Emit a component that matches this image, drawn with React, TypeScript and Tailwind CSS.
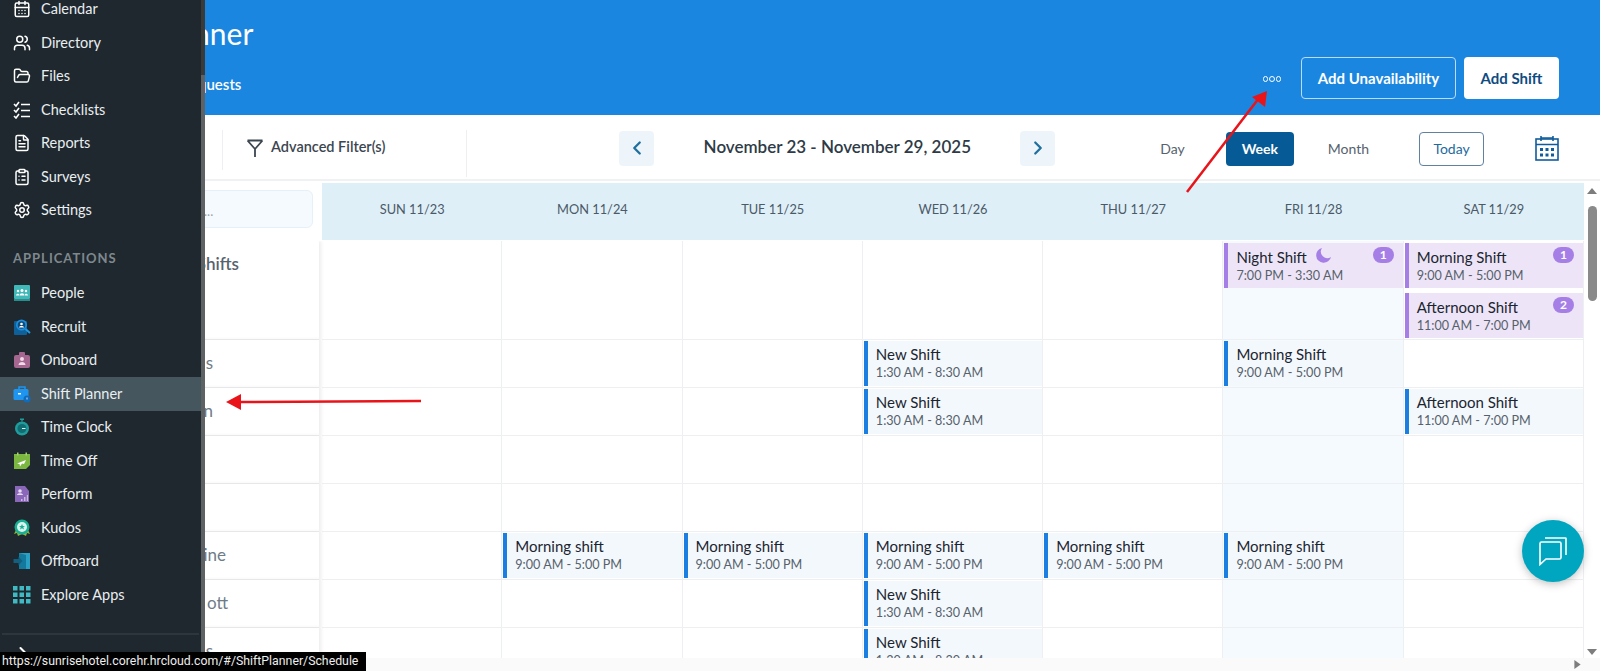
import React from 'react';
import {
  CalendarDays,
  ChevronLeft,
  ChevronRight,
  ClipboardList,
  FileText,
  FolderOpen,
  Settings,
  Users,
} from 'lucide-react';

type Shift = { name: string; time: string; purple?: boolean; badge?: number; moon?: boolean };
type Row = { label: string; pr: string; h: string; top?: boolean; cells: Record<number, Shift[]> };

const morning = { name: 'Morning shift', time: '9:00 AM - 5:00 PM' };
const newShift = { name: 'New Shift', time: '1:30 AM - 8:30 AM' };

const days = ['SUN 11/23', 'MON 11/24', 'TUE 11/25', 'WED 11/26', 'THU 11/27', 'FRI 11/28', 'SAT 11/29'];

const rows: Row[] = [
  {
    label: 'Open Shifts',
    pr: 'pr-[80px]',
    h: 'h-[99px]',
    top: true,
    cells: {
      5: [{ name: 'Night Shift', time: '7:00 PM - 3:30 AM', purple: true, badge: 1, moon: true }],
      6: [
        { name: 'Morning Shift', time: '9:00 AM - 5:00 PM', purple: true, badge: 1 },
        { name: 'Afternoon Shift', time: '11:00 AM - 7:00 PM', purple: true, badge: 2 },
      ],
    },
  },
  {
    label: 's',
    pr: 'pr-[106px]',
    h: 'h-[48px]',
    cells: { 3: [newShift], 5: [{ name: 'Morning Shift', time: '9:00 AM - 5:00 PM' }] },
  },
  {
    label: 'n',
    pr: 'pr-[106px]',
    h: 'h-[48px]',
    cells: { 3: [newShift], 6: [{ name: 'Afternoon Shift', time: '11:00 AM - 7:00 PM' }] },
  },
  { label: '', pr: '', h: 'h-[48px]', cells: {} },
  { label: '', pr: '', h: 'h-[48px]', cells: {} },
  {
    label: 'ine',
    pr: 'pr-[93px]',
    h: 'h-[48px]',
    cells: { 1: [morning], 2: [morning], 3: [morning], 4: [morning], 5: [morning] },
  },
  { label: 'ott', pr: 'pr-[91px]', h: 'h-[48px]', cells: { 3: [newShift] } },
  { label: 's', pr: 'pr-[106px]', h: 'h-[48px]', cells: { 3: [newShift] } },
];

const ChecklistIcon = () => (
  <svg viewBox="0 0 18 18" className="h-[18px] w-[18px]" fill="none" stroke="#fff" strokeWidth="1.600">
    <path d="M1 3l2 2 3-4M1 9l2 2 3-4M1 15l2 2 3-4" />
    <path d="M8 3.500h9M8 9.500h9M8 15.500h9" />
  </svg>
);

const PeopleIcon = () => (
  <svg viewBox="0 0 18 18" className="h-[18px] w-[18px]">
    <rect x="1" y="1" width="16" height="14" rx="1" fill="#41b8b8" />
    <rect x="1" y="15" width="16" height="2" fill="#2a8c8c" />
    <circle cx="9" cy="6.500" r="1.500" fill="#fff" />
    <circle cx="5" cy="7" r="1.200" fill="#fff" />
    <circle cx="13" cy="7" r="1.200" fill="#fff" />
    <path d="M6.500 11.500c0-3 5-3 5 0zM3 11.500c0-2 3-2.400 3-1v1zM15 11.500c0-2-3-2.400-3-1v1z" fill="#fff" />
  </svg>
);

const RecruitIcon = () => (
  <svg viewBox="0 0 18 18" className="h-[18px] w-[18px]">
    <rect x="1" y="3" width="13" height="14" rx="1" fill="#0f5f99" />
    <circle cx="8.500" cy="7" r="5.500" fill="#1c8fdc" />
    <circle cx="8.500" cy="7" r="3.800" fill="#0f4c7d" />
    <circle cx="8.500" cy="6" r="1.300" fill="#fff" />
    <path d="M6 9.500c0-2 5-2 5 0z" fill="#fff" />
    <path d="M12.500 11l4.500 4" stroke="#1c9ae8" strokeWidth="2" />
  </svg>
);

const OnboardIcon = () => (
  <svg viewBox="0 0 18 18" className="h-[18px] w-[18px]">
    <rect x="1" y="4" width="16" height="13" rx="2" fill="#a5668f" />
    <rect x="6" y="1" width="6" height="5" rx="1" fill="#a5668f" />
    <circle cx="9" cy="8" r="2" fill="#f0d9e8" />
    <path d="M5.500 14c0-4 7-4 7 0z" fill="#f0d9e8" />
  </svg>
);

const PlannerIcon = () => (
  <svg viewBox="0 0 18 18" className="h-[18px] w-[18px]">
    <path d="M6 4V2h6v2" fill="none" stroke="#1e96f0" strokeWidth="1.500" />
    <rect x="0.500" y="4" width="15" height="11" rx="1.500" fill="#1e96f0" />
    <rect x="5" y="8" width="3" height="1.500" fill="#fff" />
    <circle cx="14" cy="14" r="3.500" fill="#0f6cbd" />
    <path d="M14 12.500V14.500" stroke="#fff" strokeWidth="0.800" />
  </svg>
);

const ClockIcon = () => (
  <svg viewBox="0 0 18 18" className="h-[18px] w-[18px]">
    <rect x="7" y="0.500" width="4" height="1.500" fill="#1f9c9c" />
    <rect x="8.300" y="1.500" width="1.400" height="2" fill="#1f9c9c" />
    <circle cx="9" cy="10.500" r="7" fill="#1f9c9c" />
    <circle cx="9" cy="10.500" r="4.500" fill="#126d73" />
    <path d="M9 10.500h3.500" stroke="#d8f2f2" strokeWidth="1" />
  </svg>
);

const TimeOffIcon = () => (
  <svg viewBox="0 0 18 18" className="h-[18px] w-[18px]">
    <path d="M1 2h16v11l-4 4H1z" fill="#7cb742" />
    <rect x="4" y="0.500" width="1.500" height="3" fill="#a6d46e" />
    <rect x="12.500" y="0.500" width="1.500" height="3" fill="#a6d46e" />
    <path d="M4 11.500l9-3.500-2 4-2-.5-2 3-.5-2.500z" fill="#fff" />
  </svg>
);

const PerformIcon = () => (
  <svg viewBox="0 0 18 18" className="h-[18px] w-[18px]">
    <path d="M2 1h10l4 5v11H2z" fill="#8a67b8" />
    <circle cx="7" cy="6" r="1.800" fill="#e6dcf3" />
    <path d="M4 10c0-2.500 6-2.500 6 0z" fill="#e6dcf3" />
    <path d="M8 16v-2h1.500v2zM11 16v-4h1.500v4zM13.800 16v-6h1.200v6z" fill="#c9b6e3" />
  </svg>
);

const KudosIcon = () => (
  <svg viewBox="0 0 18 18" className="h-[18px] w-[18px]">
    <path d="M1 15l3-1 1 3 4-2 4 2 1-3 3 1-2-4H3z" fill="#8ab83c" />
    <circle cx="9" cy="8" r="7.500" fill="#18b094" />
    <circle cx="9" cy="8" r="5" fill="#d9f4ee" />
    <path d="M9 5l.9 2h2.100l-1.700 1.300.7 2.200L9 9.200 7 10.500l.7-2.200L6 7h2.100z" fill="#18b094" />
  </svg>
);

const OffboardIcon = () => (
  <svg viewBox="0 0 18 18" className="h-[18px] w-[18px]">
    <path d="M6 1h11v16H6z" fill="#2aa0c4" />
    <path d="M6 1l7 2v14H6z" fill="#137a9e" />
    <path d="M0.500 7h5V4.500L9.500 9l-4 4.500V11h-5z" fill="#125f80" />
  </svg>
);

const AppsIcon = () => (
  <svg viewBox="0 0 18 18" className="h-[18px] w-[18px]" fill="#3fb9c4">
    {[0, 6.5, 13].map((y) =>
      [0, 6.5, 13].map((x) => <rect key={`${x}-${y}`} x={x} y={y} width="4.500" height="4.500" />)
    )}
  </svg>
);

const topLinks = [
  { icon: CalendarDays, label: 'Calendar' },
  { icon: Users, label: 'Directory' },
  { icon: FolderOpen, label: 'Files' },
  { icon: ChecklistIcon, label: 'Checklists' },
  { icon: FileText, label: 'Reports' },
  { icon: ClipboardList, label: 'Surveys' },
  { icon: Settings, label: 'Settings' },
];

const appLinks = [
  { icon: PeopleIcon, label: 'People' },
  { icon: RecruitIcon, label: 'Recruit' },
  { icon: OnboardIcon, label: 'Onboard' },
  { icon: PlannerIcon, label: 'Shift Planner', active: true },
  { icon: ClockIcon, label: 'Time Clock' },
  { icon: TimeOffIcon, label: 'Time Off' },
  { icon: PerformIcon, label: 'Perform' },
  { icon: KudosIcon, label: 'Kudos' },
  { icon: OffboardIcon, label: 'Offboard' },
  { icon: AppsIcon, label: 'Explore Apps' },
];

const Sidebar = () => (
  <aside className="absolute left-0 top-0 z-20 flex h-full w-[205px] overflow-hidden bg-[#1f282e]">
    <div className="-mt-[7.5px] w-[201px] shrink-0">
      {topLinks.map((link) => {
        const Icon = link.icon;
        return (
          <div key={link.label} className="flex h-[33.5px] items-center gap-[10px] pl-[13px] text-[14.5px] text-[#e9eef1]">
            <Icon size={18} strokeWidth={2} className="text-white" />
            {link.label}
          </div>
        );
      })}
      <div className="flex h-[49.5px] items-center pl-[13px] pt-[13px] text-[13px] font-bold tracking-[1px] text-[#7f888e]">
        APPLICATIONS
      </div>
      {appLinks.map((link) => {
        const Icon = link.icon;
        return (
          <div
            key={link.label}
            className={`flex h-[33.5px] items-center gap-[10px] pl-[13px] text-[14.5px] text-[#e9eef1] ${link.active ? 'bg-[#46565f]' : ''}`}
          >
            <Icon />
            {link.label}
          </div>
        );
      })}
      <div className="mx-[2px] mt-[21px] h-[2px] bg-[#2c363c]" />
      <ChevronRight size={20} strokeWidth={2.5} className="ml-[13px] mt-[8px] text-white" />
    </div>
    <div className="flex w-[4px] flex-col">
      <div className="h-[75px] bg-[#3a3a38]" />
      <div className="flex-1 bg-[#5e6264]" />
    </div>
  </aside>
);

const ShiftCard = ({ shift }: { shift: Shift }) => (
  <div
    className={`relative ml-[1px] h-[45px] border-l-4 pl-[8px] ${
      shift.purple ? 'border-[#a67fe6] bg-[#ede5f7] pt-[4px]' : 'border-[#1a7fe0] bg-[#f3f8fd] pt-[3px]'
    }`}
  >
    <div className="flex h-[20px] items-center gap-[9px] text-[15px] leading-[20px] text-[#1b2530]">
      {shift.name}
      {shift.moon && (
        <svg viewBox="0 0 16 16" className="-mt-[4px] h-[16px] w-[16px]" fill="#a67fe6">
          <path d="M6 1A7.500 7.500 0 1 0 15 10 6.500 6.500 0 0 1 6 1z" />
        </svg>
      )}
    </div>
    <div className="text-[12.6px] leading-[17px] text-[#56616b]">{shift.time}</div>
    {shift.badge && (
      <span className="absolute right-[9px] top-[4px] flex h-[16px] w-[21px] items-center justify-center rounded-full bg-[#a67fe6] text-[12px] font-bold text-white">
        {shift.badge}
      </span>
    )}
  </div>
);

const Grid = () => (
  <div className="flex min-h-0 flex-1">
    <div className="min-w-0 flex-1">
      <div className="flex h-[60px] pt-[2px]">
        <div className="flex w-[322px] shrink-0 items-start pt-[7px]">
          <div className="h-[38px] w-[313px] rounded-md border border-[#e6f0f8] bg-[#f5fafe] pl-[203px] pt-[13px] text-[13px] leading-[14px] text-[#9aa5ae]">
            ...
          </div>
        </div>
        <div className="grid h-[57px] flex-1 grid-cols-7 bg-[#dfeff8]">
          {days.map((day) => (
            <div key={day} className="flex items-center justify-center pb-[3px] text-[12.8px] text-[#4b5a67]">
              {day}
            </div>
          ))}
        </div>
      </div>
      <div className="h-[417px] overflow-hidden">
        {rows.map((row, i) => (
          <div key={i} className={`flex ${row.h}`}>
            <div
              className={`flex w-[319px] shrink-0 justify-end border-b border-[#eeeff0] bg-white text-[17px] shadow-[2px_0_4px_rgba(0,0,0,0.08)] ${row.pr} ${
                row.top ? 'items-start pt-[10px] font-semibold text-[#56636f]' : 'items-center pb-[2px] text-[#6f7c88]'
              }`}
            >
              {row.label}
            </div>
            <div className="w-[3px] shrink-0" />
            <div className="grid flex-1 grid-cols-7">
              {days.map((day, d) => (
                <div
                  key={day}
                  className={`flex flex-col gap-[5px] border-b border-r border-[#eeeff0] ${row.top ? 'pt-[2px]' : 'pt-[1px]'} ${d === 5 ? 'bg-[#f5fafe]' : ''}`}
                >
                  {(row.cells[d] || []).map((shift) => (
                    <ShiftCard key={shift.name} shift={shift} />
                  ))}
                </div>
              ))}
            </div>
          </div>
        ))}
      </div>
    </div>
    <div className="flex w-[16px] shrink-0 flex-col items-center pt-[7px] pb-[3px]">
      <svg viewBox="0 0 10 6" className="h-[6px] w-[10px]" fill="#7d7d7d">
        <path d="M5 0l5 6H0z" />
      </svg>
      <div className="ml-[1px] mt-[12px] h-[95px] w-[9px] rounded-full bg-[#8a8a8a]" />
      <svg viewBox="0 0 10 6" className="mt-auto h-[6px] w-[10px]" fill="#7d7d7d">
        <path d="M5 6L0 0h10z" />
      </svg>
    </div>
  </div>
);

const App = () => {
  return (
    <div className="relative h-[671px] w-[1600px] overflow-hidden bg-white font-[Lato,sans-serif]">
      <div className="flex h-full flex-col">
        <header className="flex h-[115px] shrink-0 bg-[#1a86e0] pr-[41px] text-white">
          <div className="pl-[85px]">
            <h1 className="mt-[14px] text-[30px] leading-[38px]">Shift Planner</h1>
            <div className="mt-[22px] pl-[96px] text-[15px] font-semibold leading-[20px]">Requests</div>
          </div>
          <div className="ml-auto flex items-start pt-[57px]">
            <div className="mr-[20px] mt-[19px] flex gap-[1px]">
              <span className="h-[5.5px] w-[5.5px] rounded-full border-[1.75px] border-white" />
              <span className="h-[5.5px] w-[5.5px] rounded-full border-[1.75px] border-white" />
              <span className="h-[5.5px] w-[5.5px] rounded-full border-[1.75px] border-white" />
            </div>
            <button className="h-[42px] w-[155px] rounded border border-[#bcdcf6] text-[15px] font-bold">
              Add Unavailability
            </button>
            <button className="ml-[8px] h-[42px] w-[95px] rounded bg-white text-[15px] font-bold text-[#0f4c81]">
              Add Shift
            </button>
          </div>
        </header>

        <div className="flex h-[66px] shrink-0 items-center border-b-2 border-[#f0f1f2] pt-[2px]">
          <div className="ml-[222px] mt-[13px] h-[40px] w-px self-start bg-[#eeeff0]" />
          <svg viewBox="0 0 16 18" className="ml-[24px] h-[18px] w-[16px]" fill="none" stroke="#3c4650" strokeWidth="1.800">
            <path d="M0.500 1.500h15M0.500 1.500L8 10l7.500-8.500M8 10v8" />
          </svg>
          <span className="mb-[3px] ml-[8px] text-[14.5px] font-semibold text-[#3c4650]">Advanced Filter(s)</span>
          <div className="ml-[81px] mt-[13px] h-[47px] w-px self-start bg-[#eeeff0]" />
          <button className="ml-[152px] flex h-[35px] w-[35px] items-center justify-center rounded bg-[#edf5fb] text-[#1f6f9f]">
            <ChevronLeft size={22} strokeWidth={2.5} />
          </button>
          <div className="w-[366px] pb-[2px] text-center text-[17px] font-semibold text-[#2e3a46]">November 23 - November 29, 2025</div>
          <button className="flex h-[35px] w-[35px] items-center justify-center rounded bg-[#edf5fb] text-[#1f6f9f]">
            <ChevronRight size={22} strokeWidth={2.5} />
          </button>
          <span className="ml-[105px] text-[14px] text-[#56626e]">Day</span>
          <button className="ml-[41px] mt-[1px] h-[34px] w-[68px] rounded bg-[#065a96] text-[14px] font-bold text-white">Week</button>
          <span className="ml-[34px] text-[14px] text-[#56626e]">Month</span>
          <button className="ml-[50px] mt-[1px] h-[34px] w-[65px] rounded border border-[#5f82a0] text-[14px] text-[#1e6a9e]">Today</button>
          <svg viewBox="0 0 24 26" className="ml-[51px] h-[26px] w-[24px]" fill="none" stroke="#0f5c9c" strokeWidth="1.600">
            <rect x="1" y="4" width="22" height="21" />
            <path d="M1 9.500h22M6 1v5M18 1v5M6 3h12" />
            <path d="M5 13h3v3H5zM10.500 13h3v3h-3zM16 13h3v3h-3zM5 18.500h3v3H5zM10.500 18.500h3v3h-3zM16 18.500h3v3h-3z" fill="#0f5c9c" stroke="none" />
          </svg>
        </div>

        <Grid />

        <div className="flex h-[13px] shrink-0 items-center justify-end bg-[#fafafa] pr-[19px]">
          <svg viewBox="0 0 7 10" className="h-[9px] w-[7px]" fill="#7d7d7d">
            <path d="M0 0l7 5-7 5z" />
          </svg>
        </div>
      </div>

      <Sidebar />

      {/* chat button */}
      <div className="absolute left-[1522px] top-[520px] z-10 flex h-[62px] w-[62px] items-center justify-center rounded-full bg-[#00a5c0] shadow-[0_2px_8px_rgba(0,0,0,0.25)]">
        <svg viewBox="0 0 30 30" className="h-[30px] w-[30px]" fill="none" stroke="#fff" strokeWidth="1.600">
          <path d="M2 7.500a1.500 1.500 0 0 1 1.500-1.500h18a1.500 1.500 0 0 1 1.500 1.500v14a1.500 1.500 0 0 1-1.500 1.500H8l-6 5.500z" />
          <path d="M7 2h20.500a.5.5 0 0 1 .5.500V19" />
        </svg>
      </div>

      {/* annotation arrows */}
      <svg className="pointer-events-none absolute inset-0 z-30 h-full w-full" viewBox="0 0 1600 671">
        <path d="M240 402L421 401" stroke="#e8141a" strokeWidth="2.500" />
        <path d="M226 402L241 394V410z" fill="#e8141a" />
        <path d="M1187 192L1259 98" stroke="#e8141a" strokeWidth="2.500" />
        <path d="M1267 91L1252 97L1265 107z" fill="#e8141a" />
      </svg>

      {/* link preview */}
      <div className="absolute bottom-0 left-0 z-40 h-[19px] w-[366px] overflow-hidden whitespace-nowrap bg-black pl-[2px] font-[Roboto,sans-serif] text-[12.3px] leading-[19px] text-[#eeeeee]">
        https://sunrisehotel.corehr.hrcloud.com/#/ShiftPlanner/Schedule
      </div>
    </div>
  );
};

export default App;
